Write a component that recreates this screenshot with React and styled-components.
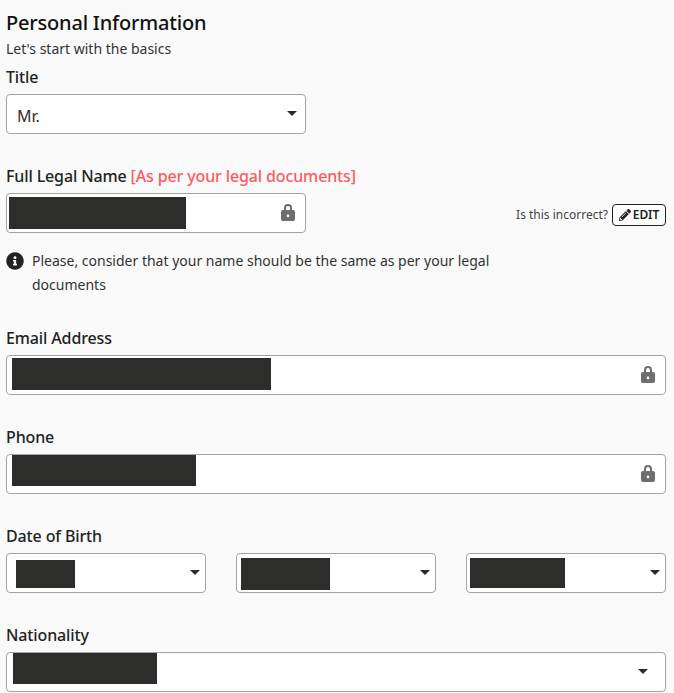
import React from "react";
import styled, { createGlobalStyle } from "styled-components";
import { FaPencilAlt, FaInfoCircle } from "react-icons/fa";

const Global = createGlobalStyle`
  html, body { margin: 0; padding: 0; background: #fafafa; overflow: hidden; }
  body { font-family: "Noto Sans", "Open Sans", sans-serif; color: #212529; }
`;

const Page = styled.div`
  width: 674px;
  height: 693px;
  box-sizing: border-box;
  padding: 9px 8px 0 6px;
  overflow: hidden;
`;
const Heading = styled.h1`
  margin: 0;
  font-size: 20px;
  line-height: 27px;
  font-weight: 500;
  letter-spacing: -0.2px;
  color: #111;
`;
const Sub = styled.p`
  margin: 3px 0 0;
  font-size: 14px;
  line-height: 20px;
  color: #333;
`;
const Label = styled.div`
  font-size: 16px;
  line-height: 22px;
  font-weight: 500;
  letter-spacing: -0.13px;
  color: #222;
  margin-top: ${p => p.$top}px;
  margin-bottom: ${p => p.$bottom ?? 6}px;
`;
const Required = styled.span`
  color: #ff5a5f;
`;
const Field = styled.div`
  position: relative;
  box-sizing: border-box;
  width: ${p => p.$width || "100%"};
  height: 40px;
  background: #fff;
  border: 1px solid #a3a3a3;
  border-radius: 4px;
  display: flex;
  align-items: center;
  justify-content: space-between;
  padding: 0 ${p => p.$pad ?? 10}px 0 10px;
  font-size: 16px;
  color: #3a2a2a;
`;
const Value = styled.span`
  margin-top: 3px;
`;
const Redaction = styled.div`
  position: absolute;
  background: #2d2d2b;
  left: ${p => p.$left}px;
  top: ${p => p.$top}px;
  width: ${p => p.$width}px;
  height: ${p => p.$height}px;
`;
const Spacer = styled.span``;
const Caret = styled.span`
  width: 0;
  height: 0;
  border-left: 5px solid transparent;
  border-right: 5px solid transparent;
  border-top: 5px solid #2b2b2b;
  margin-top: -1px;
`;
const NameRow = styled.div`
  display: flex;
  align-items: center;
  justify-content: space-between;
`;
const EditArea = styled.div`
  display: flex;
  align-items: center;
  gap: 4px;
  font-size: 12px;
  color: #444;
  margin-top: 3px;
`;
const EditButton = styled.button`
  height: 22px;
  width: 54px;
  box-sizing: border-box;
  display: flex;
  align-items: center;
  justify-content: center;
  gap: 2px;
  background: #fff;
  border: 1px solid #222;
  border-radius: 4px;
  padding: 0;
  font: 600 12px "Noto Sans", sans-serif;
  letter-spacing: -0.1px;
  color: #222;
`;
const Notice = styled.div`
  display: flex;
  gap: 8px;
  width: 500px;
  margin-top: 16px;
  font-size: 14px;
  line-height: 24px;
  color: #333;
`;
const NoticeIcon = styled.span`
  flex: none;
  display: flex;
  height: 24px;
  align-items: center;
  color: #222;
  font-size: 18px;
`;
const DateRow = styled.div`
  display: grid;
  grid-template-columns: repeat(3, 200px);
  justify-content: space-between;
`;
const LockGlyph = styled.svg`
  margin-top: -2px;
`;

const Lock = () => (
  <LockGlyph width="14" height="18" viewBox="0 0 14 18" aria-hidden="true">
    <path fill="#6e6e6e" fillRule="evenodd" d="M3 7V5a4 4 0 0 1 8 0v2h1a2 2 0 0 1 2 2v7a2 2 0 0 1-2 2H2a2 2 0 0 1-2-2V9a2 2 0 0 1 2-2h1Zm2 0h4V5a2 2 0 0 0-4 0v2Zm2 4.6a1.3 1.3 0 1 0 0 2.6 1.3 1.3 0 0 0 0-2.6Z" />
  </LockGlyph>
);

const Select = ({ width, pad, children, redaction }) => (
  <Field $width={width} $pad={pad}>
    {redaction && <Redaction {...redaction} />}
    {children || <Spacer />}
    <Caret />
  </Field>
);

const box = (l, t, w, h) => ({ $left: l, $top: t, $width: w, $height: h });

const Locked = ({ width, redaction }) => (
  <Field $width={width}>
    <Redaction {...redaction} />
    <Spacer />
    <Lock />
  </Field>
);

export default function App() {
  return (
    <Page>
      <Global />
      <Heading>Personal Information</Heading>
      <Sub>Let's start with the basics</Sub>
      <Label $top={7}>Title</Label>
      <Select width="300px" pad={8}><Value>Mr.</Value></Select>
      <Label $top={31}>
        Full Legal Name <Required>[As per your legal documents]</Required>
      </Label>
      <NameRow>
        <Locked width="300px" redaction={box(2, 3, 177, 32)} />
        <EditArea>
          Is this incorrect?
          <EditButton><FaPencilAlt size={12} />EDIT</EditButton>
        </EditArea>
      </NameRow>
      <Notice>
        <NoticeIcon><FaInfoCircle /></NoticeIcon>
        <span>Please, consider that your name should be the same as per your legal documents</span>
      </Notice>
      <Label $top={30}>Email Address</Label>
      <Locked redaction={box(5, 2, 259, 32)} />
      <Label $top={31}>Phone</Label>
      <Locked redaction={box(5, 0, 184, 31)} />
      <Label $top={31}>Date of Birth</Label>
      <DateRow>
        <Select pad={5} redaction={box(9, 6, 59, 28)} />
        <Select pad={5} redaction={box(4, 4, 89, 32)} />
        <Select pad={5} redaction={box(3, 4, 95, 30)} />
      </DateRow>
      <Label $top={31}>Nationality</Label>
      <Select pad={17} redaction={box(6, 0, 144, 31)} />
    </Page>
  );
}
